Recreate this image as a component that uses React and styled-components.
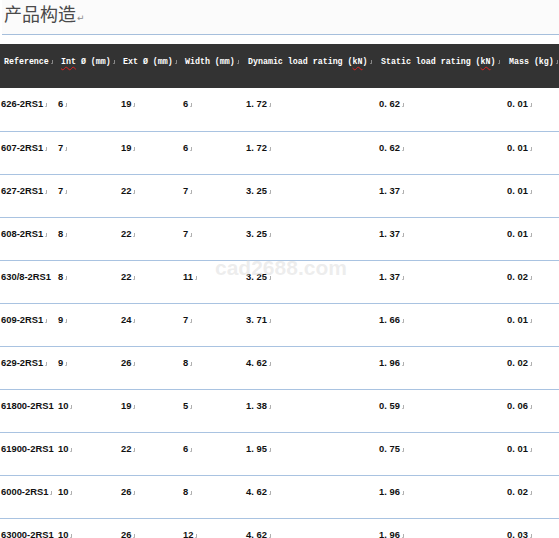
import styled, { createGlobalStyle } from "styled-components";

const Global = createGlobalStyle`
  body { margin: 0; background: #fff; }
`;

const Page = styled.div`
  position: relative;
  width: 559px;
  height: 538px;
  overflow: hidden;
  background: #fff;
`;

const TitleBar = styled.div`
  height: 35px;
  margin-left: 2px;
  background: #fbfbfb;
  border-bottom: 1px solid #a6bfdc;
  display: flex;
  align-items: flex-start;
  padding: 1px 0 0 2px;
  box-sizing: border-box;
`;

const Title = styled.h2`
  margin: 0;
  font-family: "Noto Sans CJK SC", "Noto Sans", sans-serif;
  font-weight: 400;
  font-size: 18px;
  line-height: 24px;
  color: #4a4a4a;
`;

const Return = styled.span`
  font-family: "DejaVu Sans", sans-serif;
  font-size: 9px;
  color: #8a8a8a;
  margin-left: 1px;
`;

const Table = styled.table`
  margin-top: 9px;
  border-collapse: collapse;
  table-layout: fixed;
  width: 559px;
`;

const HeadRow = styled.tr`
  background: #333333;
  height: 44px;
`;

const Th = styled.th`
  text-align: left;
  vertical-align: top;
  padding: 13px 0 0 ${(p) => p.$pad || 4}px;
  font-family: "Liberation Mono", monospace;
  font-weight: 700;
  font-size: 8.3px;
  color: #fff;
  white-space: nowrap;
  overflow: hidden;
`;

const Row = styled.tr`
  height: 43px;
  border-bottom: 1px solid #a9c3e1;
`;

const Td = styled.td`
  vertical-align: top;
  padding: 10px 0 0 1px;
  font-family: "Liberation Sans", Arial, sans-serif;
  font-weight: 700;
  font-size: 9.4px;
  color: #111;
  white-space: nowrap;
  overflow: visible;
`;

const Mark = styled.span`
  display: inline-block;
  width: 1px;
  height: 3px;
  margin-left: 2px;
  border-right: 1px solid ${(p) => (p.$dark ? "#888" : "#b0b0b0")};
  border-bottom: 1px solid ${(p) => (p.$dark ? "#777" : "#c4c4c4")};
  vertical-align: baseline;
`;

const Spell = styled.span`
  text-decoration: underline wavy #e02020;
  text-decoration-thickness: 1px;
  text-underline-offset: 2px;
`;

const Watermark = styled.div`
  position: absolute;
  left: 215px;
  top: 256px;
  font-family: "Liberation Sans", Arial, sans-serif;
  font-weight: 700;
  font-size: 21px;
  color: rgba(215, 215, 215, 0.45);
  pointer-events: none;
`;

const cols = [57, 63, 62, 63, 133, 128, 53];

const rows = [
  ["626-2RS1", "6", "19", "6", "1. 72", "0. 62", "0. 01"],
  ["607-2RS1", "7", "19", "6", "1. 72", "0. 62", "0. 01"],
  ["627-2RS1", "7", "22", "7", "3. 25", "1. 37", "0. 01"],
  ["608-2RS1", "8", "22", "7", "3. 25", "1. 37", "0. 01"],
  ["630/8-2RS1", "8", "22", "11", "3. 25", "1. 37", "0. 02"],
  ["609-2RS1", "9", "24", "7", "3. 71", "1. 66", "0. 01"],
  ["629-2RS1", "9", "26", "8", "4. 62", "1. 96", "0. 02"],
  ["61800-2RS1", "10", "19", "5", "1. 38", "0. 59", "0. 06"],
  ["61900-2RS1", "10", "22", "6", "1. 95", "0. 75", "0. 01"],
  ["6000-2RS1", "10", "26", "8", "4. 62", "1. 96", "0. 02"],
  ["63000-2RS1", "10", "26", "12", "4. 62", "1. 96", "0. 03"],
];

function App() {
  return (
    <Page>
      <Global />
      <TitleBar>
        <Title>
          产品构造<Return>↵</Return>
        </Title>
      </TitleBar>
      <Table>
        <colgroup>
          {cols.map((w, i) => (
            <col key={i} style={{ width: w }} />
          ))}
        </colgroup>
        <thead>
          <HeadRow>
            <Th $pad={4}>Reference<Mark $dark /></Th>
            <Th $pad={4}><Spell>Int</Spell> Ø (mm)<Mark $dark /></Th>
            <Th $pad={3}>Ext Ø (mm)<Mark $dark /></Th>
            <Th $pad={3}>Width (mm)<Mark $dark /></Th>
            <Th $pad={3}>Dynamic load rating (<Spell>kN</Spell>)<Mark $dark /></Th>
            <Th $pad={3}>Static load rating (<Spell>kN</Spell>)<Mark $dark /></Th>
            <Th $pad={3}>Mass (kg)<Mark $dark /></Th>
          </HeadRow>
        </thead>
        <tbody>
          {rows.map((r, i) => (
            <Row key={i}>
              {r.map((c, j) => (
                <Td key={j}>
                  {c}
                  {!(j === 0 && c.length > 9) && <Mark />}
                </Td>
              ))}
            </Row>
          ))}
        </tbody>
      </Table>
      <Watermark>cad2688.com</Watermark>
    </Page>
  );
}

export default App;
